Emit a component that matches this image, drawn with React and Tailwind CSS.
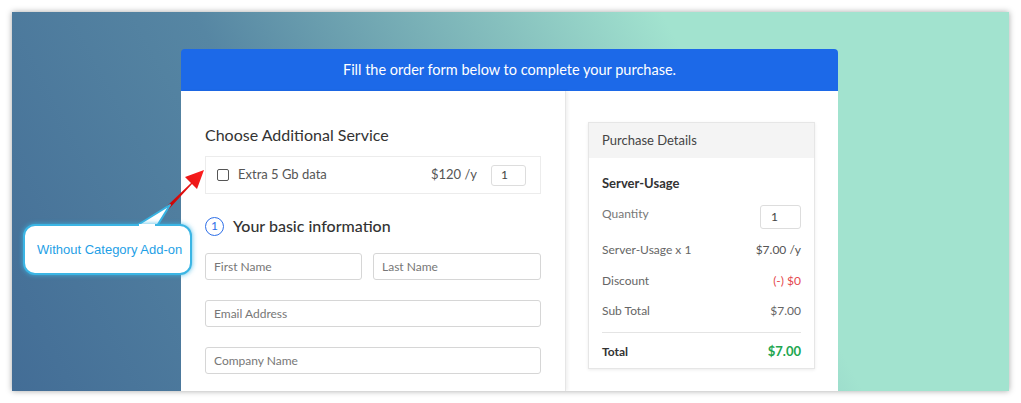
const rows = [
  { label: "Server-Usage x 1", value: "$7.00 /y", color: "text-[#555]" },
  { label: "Discount", value: "(-) $0", color: "text-[#e5484d]" },
  { label: "Sub Total", value: "$7.00", color: "text-[#666]" },
];

function Field({ placeholder, className = "" }) {
  return (
    <div
      className={`h-[27px] rounded-[3px] border border-[#d6d6d6] px-2 flex items-center text-[12px] text-[#777] ${className}`}
    >
      {placeholder}
    </div>
  );
}

function Callout() {
  return (
    <>
      <svg
        className="absolute left-0 top-0 pointer-events-none"
        width="997"
        height="379"
      >
        <defs>
          <linearGradient id="arrowRed" x1="0" y1="1" x2="1" y2="0">
            <stop offset="0" stopColor="#c40000" />
            <stop offset="1" stopColor="#ff2020" />
          </linearGradient>
        </defs>
        {/* arrow shaft + head */}
        <polygon
          points="154,195 179,171 173,165 192,158 185,177 180,172 156,198"
          fill="url(#arrowRed)"
        />
        {/* callout tail */}
        <polygon
          points="124,214 145,214 158,193"
          fill="#ffffff"
          stroke="#38b3e2"
          strokeWidth="2"
          strokeLinejoin="round"
        />
      </svg>
      <div className="absolute left-[11px] top-[212px] w-[169px] h-[51px] rounded-[12px] border-2 border-[#3bb5e4] bg-white shadow-[0_0_5px_rgba(59,181,228,0.9)] flex items-center pl-[12px] font-['Liberation_Sans',Arial,sans-serif] text-[13px] text-[#1f9fe6]">
        Without Category Add-on
      </div>
      {/* cover the seam where tail meets box */}
      <div className="absolute left-[127px] top-[212px] w-[16px] h-[3px] bg-white" />
    </>
  );
}

export default function App() {
  return (
    <div className="w-[1021px] h-[403px] bg-white overflow-hidden pt-[12px] pl-[12px] font-['Lato','Noto_Sans',sans-serif]">
      <div className="relative w-[997px] h-[379px] overflow-hidden shadow-[0_0_6px_rgba(0,0,0,0.35)] bg-[linear-gradient(62deg,#436d96_0%,#5686a3_32%,#86c0be_57%,#a2e3cf_71%,#a2e3cf_100%)]">
        <div className="ml-[169px] mt-[37px] w-[657px]">
          <div className="h-[42px] rounded-t-[4px] bg-[#1c69e8] flex items-center justify-center text-white text-[14.5px]">
            Fill the order form below to complete your purchase.
          </div>
          <div className="flex bg-white h-[300px]">
            {/* left column */}
            <div className="w-[385px] border-r border-[#e6e6e6] shadow-[2px_0_3px_rgba(0,0,0,0.06)] px-6 pt-[33px]">
              <h2 className="text-[16px] text-[#333] leading-[22px]">
                Choose Additional Service
              </h2>
              <div className="mt-[10px] h-[38px] border border-[#ececec] flex items-center pl-[11px] pr-[14px] text-[13px] text-[#555]">
                <span className="w-[12px] h-[12px] rounded-[2px] border border-[#555] mr-[9px]" />
                <span>Extra 5 Gb data</span>
                <span className="ml-auto mr-[14px] text-[13px] text-[#555]">$120 /y</span>
                <span className="w-[35px] h-[21px] rounded-[3px] border border-[#ddd] flex items-center pl-[9px] text-[12px] text-[#444]">
                  1
                </span>
              </div>
              <div className="mt-[21px] flex items-center gap-[9px]">
                <span className="w-[19px] h-[19px] rounded-full border-[1.5px] border-[#2e6fe8] flex items-center justify-center text-[12px] text-[#2e6fe8] leading-none">
                  1
                </span>
                <h3 className="text-[16px] text-[#333] font-medium leading-[22px]">
                  Your basic information
                </h3>
              </div>
              <div className="mt-[16px] flex gap-[11px]">
                <Field placeholder="First Name" className="w-[157px]" />
                <Field placeholder="Last Name" className="flex-1" />
              </div>
              <Field placeholder="Email Address" className="mt-[20px]" />
              <Field placeholder="Company Name" className="mt-[20px]" />
            </div>
            {/* right column */}
            <div className="flex-1 pl-[22px] pr-[23px] pt-[31px]">
              <div className="border border-[#e6e6e6] shadow-[0_1px_3px_rgba(0,0,0,0.08)]">
                <div className="h-[35px] bg-[#f4f4f4] flex items-center px-[13px] text-[13px] text-[#444]">
                  Purchase Details
                </div>
                <div className="px-[13px] pt-[16px] text-[12px]">
                  <div className="text-[13px] leading-[18px] font-bold text-[#333]">Server-Usage</div>
                  <div className="mt-[13px] flex justify-between items-start">
                    <span className="text-[#777] leading-[16px] pt-[1px]">Quantity</span>
                    <span className="w-[41px] h-[24px] rounded-[3px] border border-[#ddd] flex items-center pl-[10px] text-[#444]">
                      1
                    </span>
                  </div>
                  <div className="mt-[6px]">
                    {rows.map((row) => (
                      <div
                        key={row.label}
                        className="flex justify-between items-center h-[30.5px]"
                      >
                        <span className="text-[#666]">{row.label}</span>
                        <span className={row.color}>{row.value}</span>
                      </div>
                    ))}
                  </div>
                  <div className="mt-[5px] border-t border-[#e4e4e4]" />
                  <div className="flex justify-between items-center h-[35px] pt-[3px] font-bold">
                    <span className="text-[#333]">Total</span>
                    <span className="text-[#22a650] text-[13px]">$7.00</span>
                  </div>
                </div>
              </div>
            </div>
          </div>
        </div>
        <Callout />
      </div>
    </div>
  );
}
